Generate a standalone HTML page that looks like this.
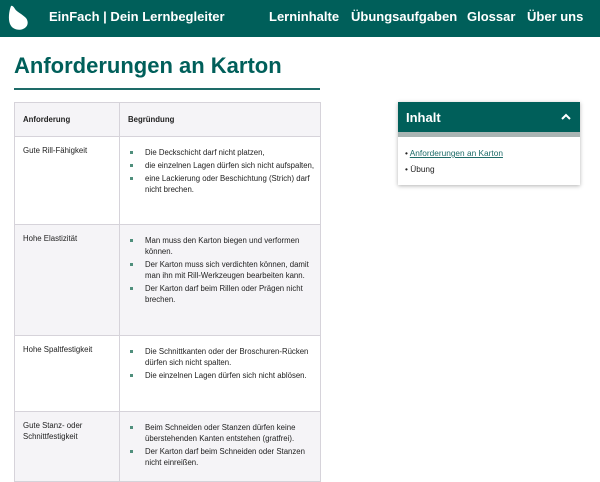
<!DOCTYPE html>
<html><head><meta charset="utf-8"><style>
*{margin:0;padding:0;box-sizing:border-box}
body{width:600px;height:473px;overflow:hidden;background:#fff;font-family:"Liberation Sans",sans-serif;color:#222;position:relative}
.hdr{position:absolute;left:0;top:0;width:600px;height:37px;background:#005f5a}
.hdr .t{position:absolute;left:49px;top:9px;color:#fff;font-size:13px;font-weight:bold}
.nav{position:absolute;top:9px;color:#fff;font-size:13px;font-weight:bold}
h1{position:absolute;left:14px;top:53px;font-size:22px;color:#005f5a;font-weight:bold}
.ul{position:absolute;left:14px;top:88px;width:306px;height:2px;background:#1e6b68}
table{position:absolute;left:14px;top:102px;width:307px;border-collapse:collapse;font-size:7.8px;line-height:11px;table-layout:fixed}
td{border:1px solid #d6d3da;vertical-align:top;padding:0;overflow:hidden}
td.a{width:105px;padding:8px 0 0 8px}
td.b{padding:10px 2px 0 8px}
tr.g td{background:#f5f4f7}
ul{list-style:none}
li{position:relative;padding-left:17px;margin-bottom:2px}
li:before{content:"";position:absolute;left:2px;top:4px;width:3px;height:3px;background:#4f8f7c}
.box{position:absolute;left:398px;top:102px;width:182px;height:83px;background:#fff;box-shadow:0 1px 4px rgba(0,0,0,.3)}
.box .h{height:30px;background:#005f5a;color:#fff;font-weight:bold;font-size:13px;padding:8px 8px}
.box .s{height:5px;background:#a9b4b3}
.box .l{font-size:8.3px;padding:8px 7px;line-height:16px}
.box .l a{color:#1e6b68;text-decoration:underline}
</style></head><body>
<div class="hdr">
<svg style="position:absolute;left:8px;top:5px" width="22" height="26" viewBox="0 0 22 26"><path d="M3 1 C1 6 0 14 2 19 C4 24 10 26 15 24 C20 22 21 17 18 13 C14 9 9 7 7 4 C6 2 4 0 3 1Z" fill="#fff"/></svg>
<div class="t">EinFach | Dein Lernbegleiter</div>
<div class="nav" style="left:269px">Lerninhalte</div>
<div class="nav" style="left:351px">Übungsaufgaben</div>
<div class="nav" style="left:467px">Glossar</div>
<div class="nav" style="left:527px">Über uns</div>
</div>
<h1>Anforderungen an Karton</h1>
<div class="ul"></div>
<table>
<tr class="g" style="height:34px"><td class="a" style="padding-top:11px;font-weight:bold">Anforderung</td><td class="b" style="padding-top:11px;font-weight:bold">Begründung</td></tr>
<tr style="height:88px"><td class="a">Gute Rill-Fähigkeit</td><td class="b"><ul><li>Die Deckschicht darf nicht platzen,</li><li>die einzelnen Lagen dürfen sich nicht aufspalten,</li><li>eine Lackierung oder Beschichtung (Strich) darf nicht brechen.</li></ul></td></tr>
<tr class="g" style="height:111px"><td class="a">Hohe Elastizität</td><td class="b"><ul><li>Man muss den Karton biegen und verformen können.</li><li>Der Karton muss sich verdichten können, damit man ihn mit Rill-Werkzeugen bearbeiten kann.</li><li>Der Karton darf beim Rillen oder Prägen nicht brechen.</li></ul></td></tr>
<tr style="height:76px"><td class="a">Hohe Spaltfestigkeit</td><td class="b"><ul><li>Die Schnittkanten oder der Broschuren-Rücken dürfen sich nicht spalten.</li><li>Die einzelnen Lagen dürfen sich nicht ablösen.</li></ul></td></tr>
<tr class="g" style="height:70px"><td class="a">Gute Stanz- oder Schnittfestigkeit</td><td class="b"><ul><li>Beim Schneiden oder Stanzen dürfen keine überstehenden Kanten entstehen (gratfrei).</li><li>Der Karton darf beim Schneiden oder Stanzen nicht einreißen.</li></ul></td></tr>
</table>
<div class="box">
<div class="h">Inhalt<svg style="position:absolute;right:9px;top:11px" width="10" height="7" viewBox="0 0 10 7"><path d="M1 6 L5 2 L9 6" stroke="#fff" stroke-width="2" fill="none"/></svg></div>
<div class="s"></div>
<div class="l">• <a>Anforderungen an Karton</a><br>• Übung</div>
</div>
</body></html>
